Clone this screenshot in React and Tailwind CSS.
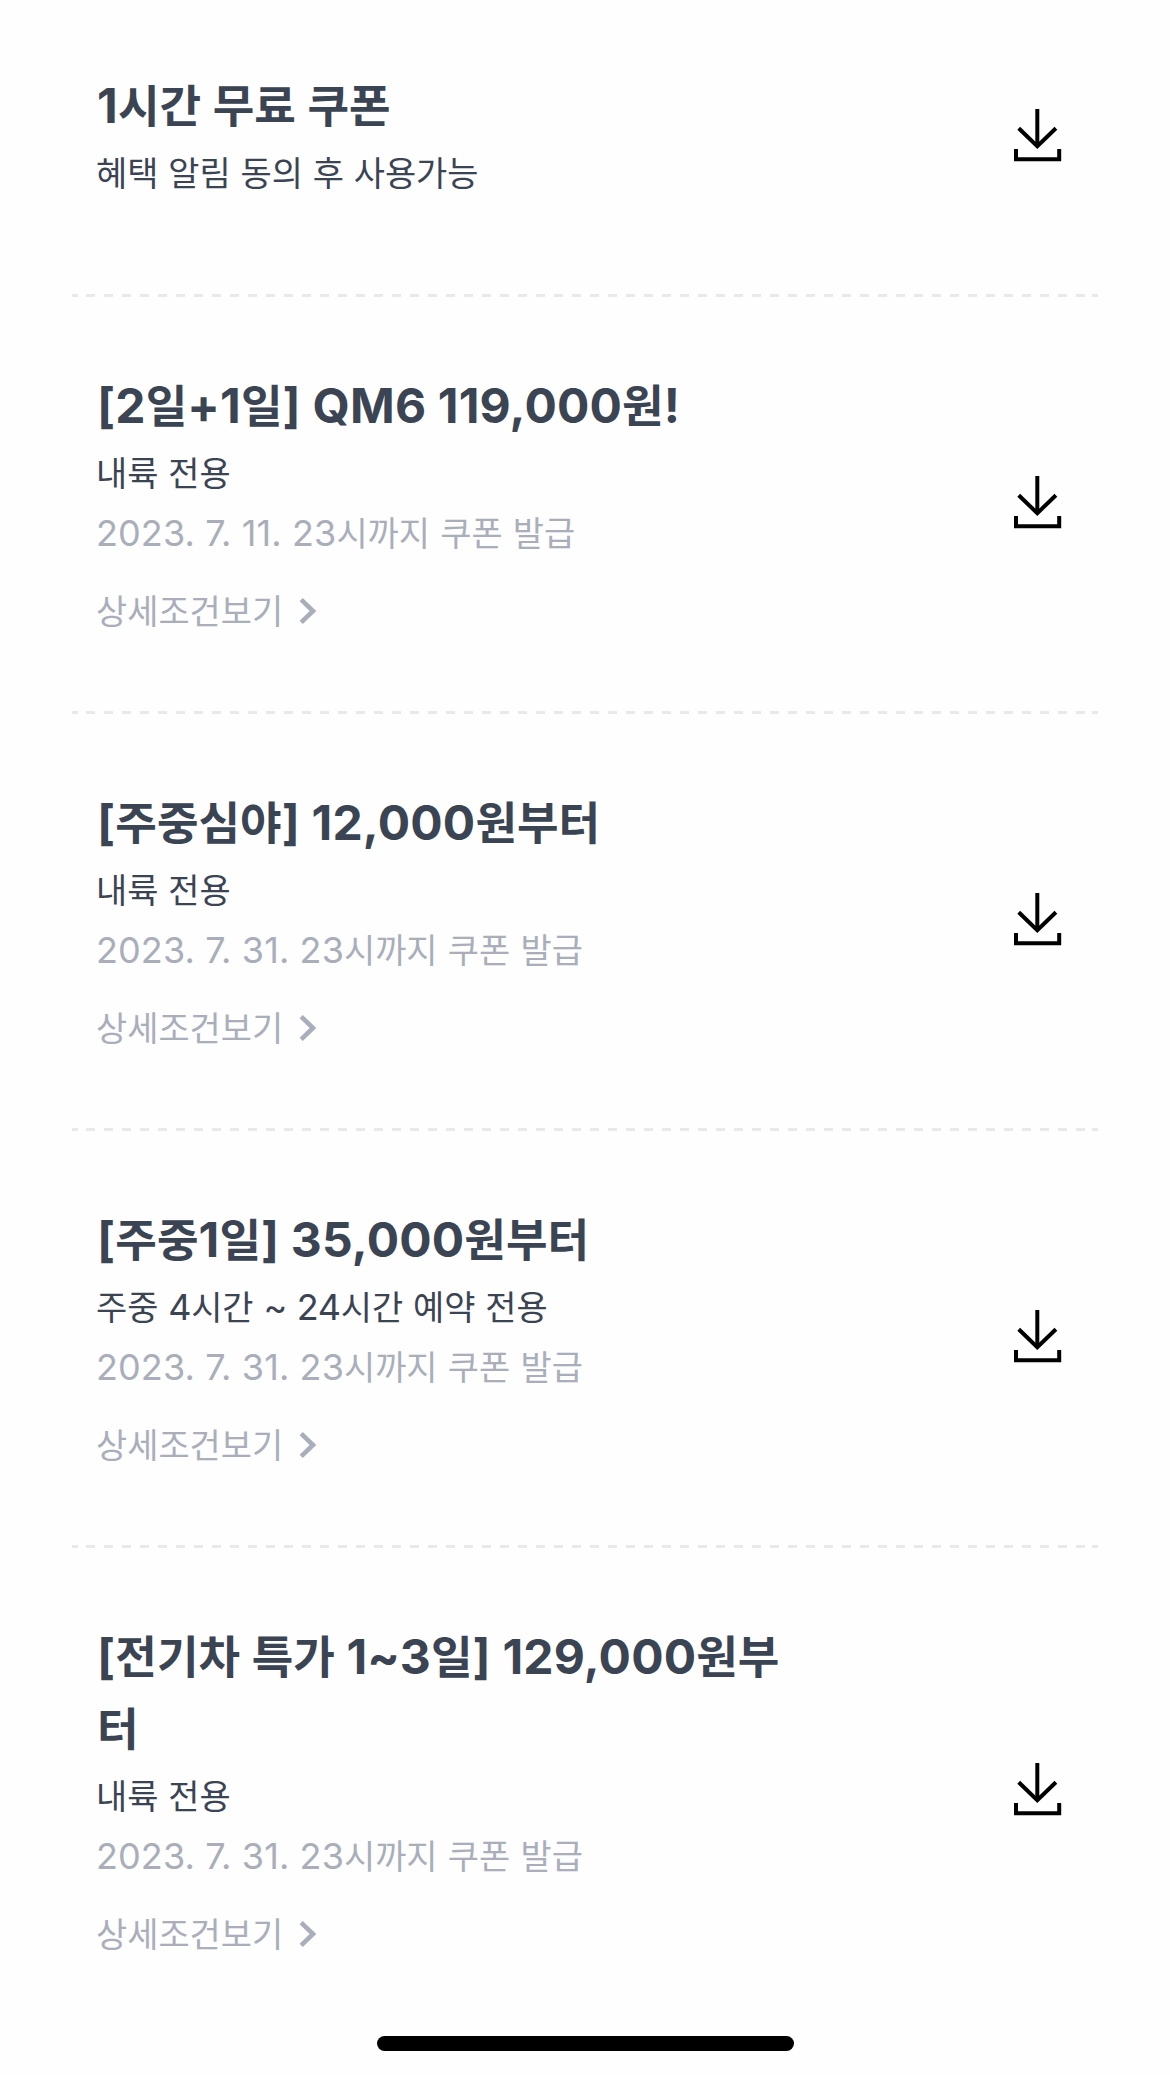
const HANGUL = /([\uac00-\ud7a3]+)/;

const coupons = [
  {
    title: "[2일+1일] QM6 119,000원!",
    scope: "내륙 전용",
    period: "2023. 7. 11. 23시까지 쿠폰 발급",
  },
  {
    title: "[주중심야] 12,000원부터",
    scope: "내륙 전용",
    period: "2023. 7. 31. 23시까지 쿠폰 발급",
  },
  {
    title: "[주중1일] 35,000원부터",
    scope: "주중 4시간 ~ 24시간 예약 전용",
    period: "2023. 7. 31. 23시까지 쿠폰 발급",
  },
  {
    title: "[전기차 특가 1~3일] 129,000원부터",
    scope: "내륙 전용",
    period: "2023. 7. 31. 23시까지 쿠폰 발급",
  },
];

// Sets Hangul runs slightly smaller so they sit evenly beside Latin letters and digits.
function Mixed({ text }) {
  return text.split(HANGUL).map((run, i) =>
    HANGUL.test(run) ? (
      <span key={i} className="text-[0.942em] leading-none tracking-normal">
        {run}
      </span>
    ) : (
      run
    )
  );
}

function DownloadIcon() {
  return (
    <svg width="48" height="53" viewBox="0 0 48 53" fill="none" stroke="#000" strokeWidth="4">
      <path d="M23.3 0V37" />
      <path d="M4.7 19.2L23.3 37.2L41.9 19.2" />
      <path d="M2 40V50.3H45.2V40" />
    </svg>
  );
}

function Chevron() {
  return (
    <svg width="18" height="28" viewBox="0 0 18 28" fill="none" stroke="#a9aeba" strokeWidth="4.6">
      <path d="M2.2 2.6L14 14L2.2 25.4" />
    </svg>
  );
}

function Divider() {
  return (
    <div className="flex h-[3px] justify-between">
      <div className="w-1.5 bg-[#e8e8ed]" />
      <div className="w-[999px] bg-[repeating-linear-gradient(90deg,#e8e8ed_0_9px,transparent_9px_18px)]" />
      <div className="w-1.5 bg-[#e8e8ed]" />
    </div>
  );
}

function Title({ children }) {
  return (
    <h2 className="mb-px pl-px text-[48px] leading-[72px] font-bold tracking-[0.2px] break-all">
      <Mixed text={children} />
    </h2>
  );
}

function Scope({ children }) {
  return (
    <p className="text-[36px] leading-[60px] tracking-[-0.3px]">
      <Mixed text={children} />
    </p>
  );
}

function Coupon({ title, scope, period }) {
  return (
    <li>
      <Divider />
      <div className="flex items-center justify-between pt-[73px] pr-9 pb-[70px] pl-6">
        <div className="w-[710px]">
          <Title>{title}</Title>
          <Scope>{scope}</Scope>
          <p className="text-[36px] leading-[60px] tracking-[0.1px] text-[#a9aeba]"><Mixed text={period} /></p>
          <button className="mt-[18px] flex h-[60px] items-center gap-4 text-[36px] leading-[60px] text-[#a9aeba]">
            <span><Mixed text="상세조건보기" /></span>
            <Chevron />
          </button>
        </div>
        <button className="pb-[7px]" aria-label="쿠폰 다운로드">
          <DownloadIcon />
        </button>
      </div>
    </li>
  );
}

export default function App() {
  return (
    <main className="relative h-[2075px] overflow-hidden bg-[#fefefe] px-[72px] pt-[70px] font-['Inter','Noto_Sans_CJK_KR',sans-serif] text-[#3b4453]">
      <section className="flex h-[224px] justify-between pr-9 pl-6">
        <div>
          <Title>1시간 무료 쿠폰</Title>
          <Scope>혜택 알림 동의 후 사용가능</Scope>
        </div>
        <button className="mt-[39px] self-start" aria-label="쿠폰 다운로드">
          <DownloadIcon />
        </button>
      </section>
      <ul>
        {coupons.map((coupon) => (
          <Coupon key={coupon.title} {...coupon} />
        ))}
      </ul>
      <div className="absolute bottom-6 left-[377px] h-[15px] w-[417px] rounded-full bg-black" />
    </main>
  );
}
